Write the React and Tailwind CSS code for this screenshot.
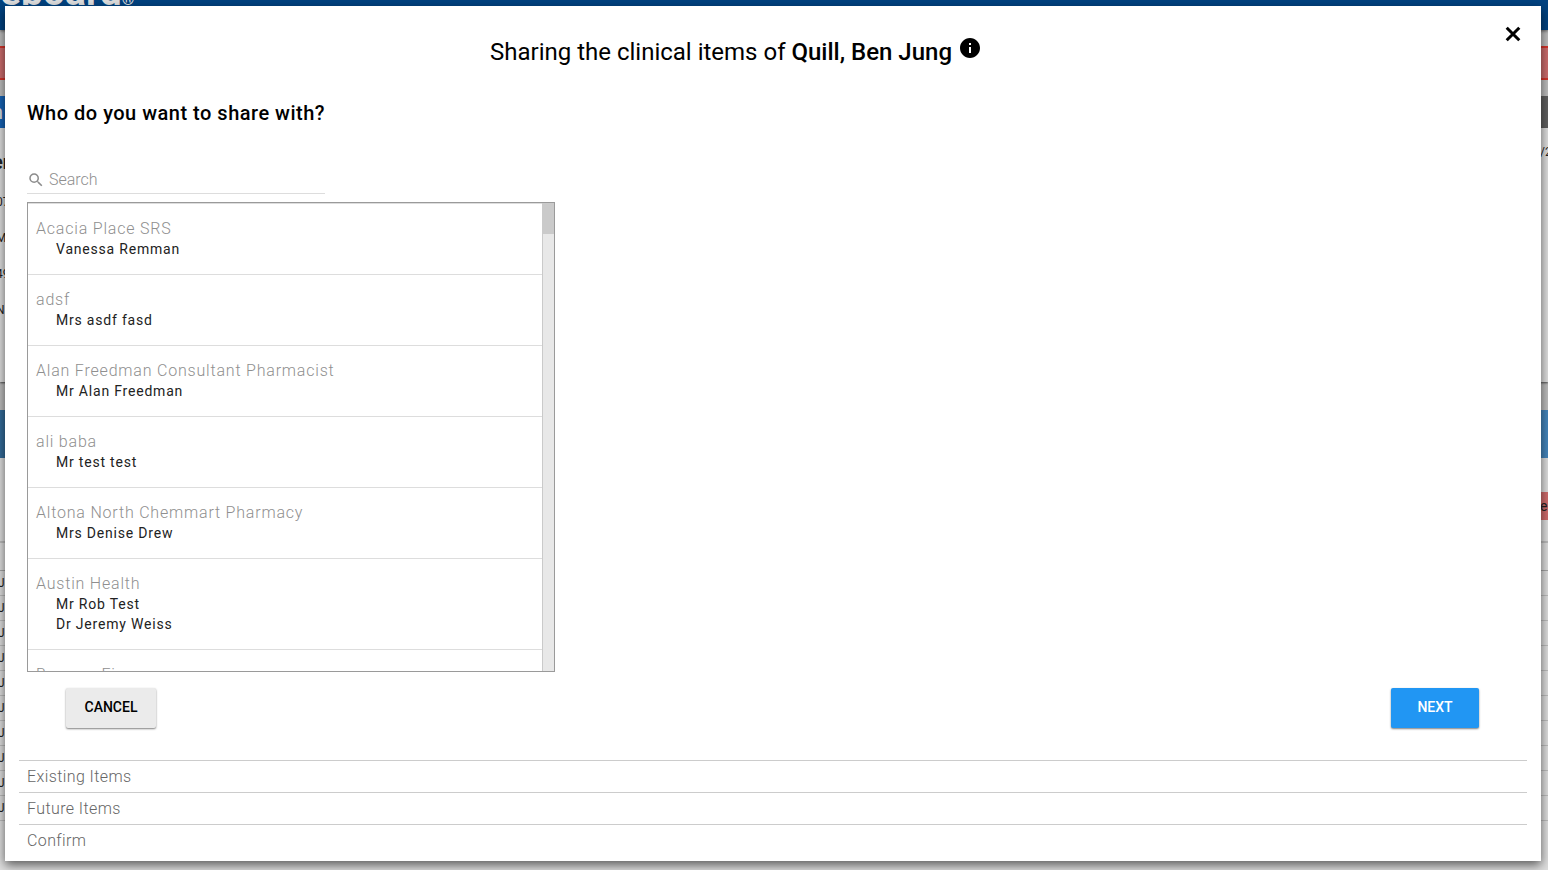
import React, {useState} from 'react';
import {MdSearch, MdInfo} from 'react-icons/md';

const organisations = [
    {name: 'Acacia Place SRS', people: ['Vanessa Remman']},
    {name: 'adsf', people: ['Mrs asdf fasd']},
    {name: 'Alan Freedman Consultant Pharmacist', people: ['Mr Alan Freedman']},
    {name: 'ali baba', people: ['Mr test test']},
    {name: 'Altona North Chemmart Pharmacy', people: ['Mrs Denise Drew']},
    {name: 'Austin Health', people: ['Mr Rob Test', 'Dr Jeremy Weiss']},
    {name: 'Bowens Fin', people: []},
];

const nextSteps = ['Existing Items', 'Future Items', 'Confirm'];

const details = ['07', 'M', '49', 'N'];

const months = ['J', 'J', 'J', 'J', 'J', 'J', 'J', 'J', 'J', 'J'];

// Record page, dimmed behind the dialog
function RecordPage() {
    return (
        <div className="h-full overflow-hidden bg-[#bdbdbd] text-[#222222]" aria-hidden="true">
            <div className="relative h-[30px] overflow-hidden bg-[#004280] shadow-[0_1px_3px_rgba(0,0,0,0.5)]">
                <div className="-mt-[28px] flex items-baseline text-[39px] leading-10 font-bold text-[#dedede]">
                    <span>eboard</span>
                    <span className="text-base leading-4 font-normal">®</span>
                </div>
            </div>
            <div className="mt-4 h-[34px] border-y-2 border-[#d3342b] bg-[#cb6c6c]"/>
            <div className="mt-4 flex h-8 justify-between bg-[#606060]">
                <div className="w-40 bg-[#1663b5] text-xl leading-8 text-[#dedede]">
                    <span className="-ml-2">n</span>
                </div>
            </div>
            <div className="h-[254px] overflow-hidden bg-[#dedede] shadow-[0_1px_2px_rgba(0,0,0,0.6)]">
                <div className="flex justify-between pt-3">
                    <span className="-ml-2 pt-2 text-xl leading-7 font-bold">er</span>
                    <span className="w-2 text-xs leading-6">/2</span>
                </div>
                <div className="pt-2">
                    {details.map(text => (
                        <p key={text} className="-ml-1 h-9 text-xs leading-9">{text}</p>
                    ))}
                </div>
            </div>
            <div className="mt-7 h-12 bg-gradient-to-r from-[#336b99] to-[#4485bb]"/>
            <div className="h-full bg-[#dedede] pt-[34px]">
                <div className="flex h-7 justify-end">
                    <span className="w-2 bg-[#cf6c6c] text-sm leading-7">e</span>
                </div>
                <div className="mt-[21px] h-[30px] border-t-2 border-b border-t-[#bcbcbc] border-b-[#a5a5a5]"/>
                {months.map((text, index) => (
                    <div key={index} className="h-[25px] border-b border-[#bcbcbc] text-xs leading-6">
                        <span className="-ml-[2px]">{text}</span>
                    </div>
                ))}
            </div>
        </div>
    );
}

function OrganisationList({items}) {
    return (
        <div className="flex h-[470px] w-[528px] max-w-full border border-[#9a9a9a]">
            <ul className="min-w-0 flex-1 overflow-hidden border-t border-[#dddddd] tracking-wider">
                {items.map(item => (
                    <li key={item.name} className="border-b border-[#dddddd] px-2 py-[15px]">
                        <p className="text-base leading-5 font-light text-[#8f8f8f]">{item.name}</p>
                        {item.people.map(person => (
                            <p key={person} className="pl-5 text-sm leading-5 text-[#222222]">{person}</p>
                        ))}
                    </li>
                ))}
            </ul>
            <div className="w-3 border-l border-[#cacaca] bg-[#e8e8e8]">
                <div className="h-[31px] bg-[#cacaca]"/>
            </div>
        </div>
    );
}

function ShareDialog() {
    const [search, setSearch] = useState('');
    const matches = organisations.filter(item => item.name.toLowerCase().includes(search.toLowerCase()));

    return (
        <div role="dialog" aria-labelledby="share-title"
             className="absolute top-[6px] right-[7px] bottom-[9px] left-[5px] overflow-hidden bg-white px-[14px] text-black shadow-[0_4px_10px_rgba(0,0,0,0.6)]">
            <div className="flex h-[84px] items-start">
                <div className="flex flex-1 items-start justify-center gap-[6px] pt-7 pl-2">
                    <h1 id="share-title" className="text-2xl leading-9">
                        Sharing the clinical items of <span className="font-medium">Quill, Ben Jung</span>
                    </h1>
                    <button type="button" aria-label="About sharing" className="pt-[2px]">
                        <MdInfo size={24}/>
                    </button>
                </div>
                <button type="button" aria-label="Close" className="ml-14 pt-4 pr-[2px]">
                    <svg width="24" height="24" viewBox="0 0 24 24" stroke="currentColor" strokeWidth="3">
                        <path d="M5.7 5.7L18.3 18.3M18.3 5.7L5.7 18.3"/>
                    </svg>
                </button>
            </div>

            <div className="px-2">
                <h2 className="pt-2 text-xl leading-[30px] font-medium tracking-wide">Who do you want to share with?</h2>
                <label className="mt-[38px] mb-2 flex h-[28px] w-[298px] items-center gap-1 border-b border-[#dddddd] text-[#8c8c8c]">
                    <MdSearch size={18}/>
                    <input type="text" aria-label="Search" placeholder="Search" value={search}
                           onChange={e => setSearch(e.target.value)}
                           className="min-w-0 flex-1 text-base leading-6 font-light outline-none placeholder:text-[#8f8f8f]"/>
                </label>
                <OrganisationList items={matches}/>
            </div>

            <div className="flex justify-between pt-4 pr-12 pb-8 pl-[47px]">
                <button type="button"
                        className="h-10 w-[90px] rounded-xs bg-[#ebebeb] pb-[2px] text-sm leading-5 font-medium shadow-[0_1px_2px_rgba(0,0,0,0.5)]">
                    CANCEL
                </button>
                <button type="button"
                        className="h-10 w-[88px] rounded-xs bg-[#2196f3] pb-[2px] text-sm leading-5 font-medium text-white shadow-[0_1px_2px_rgba(0,0,0,0.5)]">
                    NEXT
                </button>
            </div>

            <ol className="tracking-wide">
                {nextSteps.map(step => (
                    <li key={step}
                        className="h-8 border-t border-[#cccccc] px-2 text-base leading-8 font-light text-[#666666]">
                        {step}
                    </li>
                ))}
            </ol>
        </div>
    );
}

function App() {
    return (
        <div className="relative h-screen overflow-hidden font-['Roboto',sans-serif]">
            <RecordPage/>
            <ShareDialog/>
        </div>
    );
}

export default App;
